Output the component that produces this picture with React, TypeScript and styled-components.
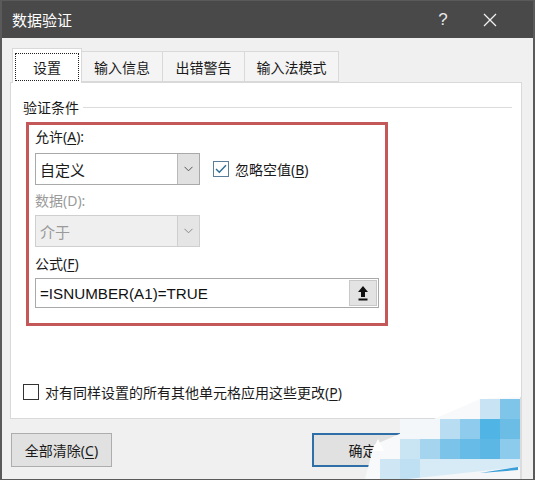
import React from 'react';
import styled, { createGlobalStyle } from 'styled-components';

const GlobalStyle = createGlobalStyle`
  html, body {
    margin: 0;
    padding: 0;
    background: #ffffff;
  }
  body {
    font-family: "Noto Sans", "Noto Sans CJK SC", sans-serif;
  }
`;

const Window = styled.div`
  position: relative;
  width: 535px;
  height: 480px;
  box-sizing: border-box;
  display: flex;
  flex-direction: column;
  background: #f0f0f0;
  border: 1px solid #5a5a5a;
  border-left-width: 2px;
  border-right-width: 2px;
  overflow: hidden;
`;

const TitleBar = styled.div`
  height: 37px;
  flex: none;
  display: flex;
  align-items: center;
  background: #494949;
  color: #ffffff;
  padding: 0 23px 0 10px;
  font-family: "Noto Sans CJK SC", sans-serif;
  font-size: 15px;
`;

const Title = styled.div`
  flex: 1;
`;

const TitleButton = styled.div<{ $w: number; $ml?: number }>`
  width: ${(p) => p.$w}px;
  margin-left: ${(p) => p.$ml ?? 0}px;
  display: flex;
  justify-content: center;
  align-items: center;
  color: #e8e8e8;
  font-size: 17px;
  font-family: "Liberation Sans", sans-serif;
`;

const Body = styled.div`
  flex: 1;
  display: flex;
  flex-direction: column;
  padding: 9px 11px 0 8px;
`;

const TabBar = styled.div`
  display: flex;
  align-items: flex-end;
  height: 35px;
  padding-left: 2px;
`;

const Tab = styled.div<{ $w: number; $active?: boolean }>`
  width: ${(p) => p.$w}px;
  height: ${(p) => (p.$active ? 35 : 31)}px;
  box-sizing: border-box;
  display: flex;
  align-items: center;
  justify-content: center;
  background: ${(p) => (p.$active ? '#ffffff' : '#f4f4f4')};
  border: 1px solid #d9d9d9;
  border-bottom: ${(p) => (p.$active ? 'none' : '1px solid #d9d9d9')};
  margin-left: ${(p) => (p.$active ? 0 : -1)}px;
  margin-bottom: ${(p) => (p.$active ? -1 : 0)}px;
  position: relative;
  z-index: ${(p) => (p.$active ? 2 : 1)};
  font-size: 14px;
  color: #1a1a1a;
`;

const FocusRect = styled.span`
  display: flex;
  align-items: center;
  justify-content: center;
  width: 62px;
  height: 26px;
  margin-top: 2px;
  border: 1px dotted #222;
`;

const Panel = styled.div`
  height: 337px;
  box-sizing: border-box;
  display: flex;
  flex-direction: column;
  background: #ffffff;
  border: 1px solid #d9d9d9;
  padding: 14px 9px 16px 12px;
  font-size: 14px;
  color: #1a1a1a;
`;

const GroupHeader = styled.div`
  display: flex;
  align-items: center;
  gap: 4px;
  height: 20px;
`;

const GroupLine = styled.div`
  flex: 1;
  height: 1px;
  background: #dcdcdc;
`;

const Highlight = styled.div`
  width: 362px;
  height: 204px;
  box-sizing: border-box;
  margin: 5px 0 0 3px;
  border: 3px solid #c45858;
  padding: 2px 6px 0 6px;
  display: flex;
  flex-direction: column;
`;

const Label = styled.div<{ $disabled?: boolean; $mt?: number }>`
  height: 20px;
  line-height: 20px;
  margin-top: ${(p) => p.$mt ?? 0}px;
  color: ${(p) => (p.$disabled ? '#9a9a9a' : '#1a1a1a')};
`;

const U = styled.span`
  text-decoration: underline;
  text-underline-offset: 2px;
`;

const Row = styled.div<{ $mt?: number }>`
  display: flex;
  align-items: center;
  margin-top: ${(p) => p.$mt ?? 0}px;
`;

const Select = styled.div<{ $disabled?: boolean }>`
  width: 165px;
  height: 32px;
  box-sizing: border-box;
  display: flex;
  border: 1px solid ${(p) => (p.$disabled ? '#cfcfcf' : '#a9a9a9')};
  background: ${(p) => (p.$disabled ? '#efefef' : '#ffffff')};
  color: ${(p) => (p.$disabled ? '#9a9a9a' : '#1a1a1a')};
`;

const SelectValue = styled.div`
  flex: 1;
  display: flex;
  align-items: center;
  padding-left: 4px;
  font-size: 15px;
`;

const SelectArrow = styled.div<{ $disabled?: boolean }>`
  width: 21px;
  display: flex;
  align-items: center;
  justify-content: center;
  background: ${(p) => (p.$disabled ? '#e5e5e5' : '#e1e1e1')};
  border-left: 1px solid ${(p) => (p.$disabled ? '#cfcfcf' : '#b9b9b9')};
`;

const CheckLabel = styled.label<{ $ml?: number }>`
  display: flex;
  align-items: center;
  gap: 6px;
  margin-left: ${(p) => p.$ml ?? 0}px;
`;

const Box = styled.span`
  width: 16px;
  height: 16px;
  box-sizing: border-box;
  display: flex;
  align-items: center;
  justify-content: center;
  border: 1px solid #333;
  background: #fff;
`;

const CheckedBox = styled(Box)`
  border-color: #5b7f99;
`;

const Formula = styled.div`
  width: 344px;
  height: 30px;
  box-sizing: border-box;
  display: flex;
  border: 1px solid #a9a9a9;
  background: #fff;
`;

const FormulaText = styled.div`
  flex: 1;
  display: flex;
  align-items: center;
  padding-left: 4px;
  font-family: "Liberation Sans", sans-serif;
  font-size: 15.2px;
  color: #111;
`;

const RefButton = styled.div`
  width: 26px;
  margin: 1px;
  display: flex;
  align-items: center;
  justify-content: center;
  background: #e3e3e3;
  border: 1px solid #c8c8c8;
`;

const BottomCheck = styled(CheckLabel)`
  margin-top: auto;
  margin-left: 0;
`;

const ButtonRow = styled.div`
  display: flex;
  margin-top: 14px;
  padding-left: 1px;
`;

const Button = styled.div<{ $primary?: boolean; $ml?: number }>`
  width: 101px;
  height: 34px;
  box-sizing: border-box;
  display: flex;
  align-items: center;
  justify-content: center;
  margin-left: ${(p) => p.$ml ?? 0}px;
  background: #e1e1e1;
  border: ${(p) => (p.$primary ? '2px solid #2f6fa8' : '1px solid #adadad')};
  font-size: 14px;
  color: #1a1a1a;
`;

const Watermark = styled.svg`
  position: absolute;
  right: 0;
  bottom: 0;
`;

const Chevron = ({ color }: { color: string }) => (
  <svg width="9" height="6" viewBox="0 0 9 6">
    <path d="M0.5 0.8 L4.5 4.8 L8.5 0.8" fill="none" stroke={color} strokeWidth="1" />
  </svg>
);

// watermark cells, in page coordinates (x, y, w, h, colour)
const cells: [number, number, number, number, string][] = [
  [480, 400, 20, 20, '#c8e3f3'],
  [500, 400, 20, 20, '#7fc4e9'],
  [400, 420, 40, 20, '#f4f7f9'],
  [440, 420, 20, 20, '#b8dcf1'],
  [460, 420, 20, 20, '#8fcbec'],
  [480, 420, 20, 20, '#50b4e4'],
  [500, 420, 20, 20, '#6bbde6'],
  [400, 440, 20, 20, '#c9e5f4'],
  [420, 440, 20, 20, '#a5d4ee'],
  [440, 440, 20, 20, '#7cc3ea'],
  [460, 440, 20, 20, '#67bbe7'],
  [480, 440, 20, 20, '#5db7e5'],
  [500, 440, 20, 20, '#8ccbeb'],
  [380, 460, 20, 20, '#cfe6f4'],
  [400, 460, 20, 20, '#bfe0f2'],
  [420, 460, 100, 20, '#d6ebf6'],
];

const WX = 363;
const WY = 396;

const App: React.FC = () => {
  return (
    <>
      <GlobalStyle />
      <Window>
        <TitleBar>
          <Title>数据验证</Title>
          <TitleButton $w={30}>?</TitleButton>
          <TitleButton $w={40} $ml={12}>
            <svg width="14" height="14" viewBox="0 0 14 14">
              <path d="M1 1 L13 13 M13 1 L1 13" stroke="#f0f0f0" strokeWidth="1.3" />
            </svg>
          </TitleButton>
        </TitleBar>
        <Body>
          <TabBar>
            <Tab $w={70} $active>
              <FocusRect>设置</FocusRect>
            </Tab>
            <Tab $w={82}>输入信息</Tab>
            <Tab $w={83}>出错警告</Tab>
            <Tab $w={95}>输入法模式</Tab>
          </TabBar>
          <Panel>
            <GroupHeader>
              <span>验证条件</span>
              <GroupLine />
            </GroupHeader>
            <Highlight>
              <Label>
                允许(<U>A</U>):
              </Label>
              <Row $mt={6}>
                <Select>
                  <SelectValue>自定义</SelectValue>
                  <SelectArrow>
                    <Chevron color="#555" />
                  </SelectArrow>
                </Select>
                <CheckLabel $ml={13}>
                  <CheckedBox>
                    <svg width="12" height="10" viewBox="0 0 12 10">
                      <path d="M1 5 L4.3 8.3 L11 1.2" fill="none" stroke="#2c6d94" strokeWidth="1.4" />
                    </svg>
                  </CheckedBox>
                  <span>
                    忽略空值(<U>B</U>)
                  </span>
                </CheckLabel>
              </Row>
              <Label $disabled $mt={6}>
                数据(D):
              </Label>
              <Row $mt={4}>
                <Select $disabled>
                  <SelectValue>介于</SelectValue>
                  <SelectArrow $disabled>
                    <Chevron color="#8a8a8a" />
                  </SelectArrow>
                </Select>
              </Row>
              <Label $mt={7}>
                公式(<U>F</U>)
              </Label>
              <Row $mt={4}>
                <Formula>
                  <FormulaText>=ISNUMBER(A1)=TRUE</FormulaText>
                  <RefButton>
                    <svg width="12" height="16" viewBox="0 0 12 16">
                      <path d="M6 1 L11 7 L8 7 L8 12 L4 12 L4 7 L1 7 Z" fill="#111" />
                      <rect x="1.5" y="13.5" width="9" height="2" fill="#111" />
                    </svg>
                  </RefButton>
                </Formula>
              </Row>
            </Highlight>
            <BottomCheck>
              <Box />
              <span>
                对有同样设置的所有其他单元格应用这些更改(<U>P</U>)
              </span>
            </BottomCheck>
          </Panel>
          <ButtonRow>
            <Button>
              全部清除(<U>C</U>)
            </Button>
            <Button $primary $ml={200}>
              确定
            </Button>
          </ButtonRow>
        </Body>
        <Watermark width="170" height="84" viewBox={`${WX} ${WY} 170 84`}>
          <path d="M365 480 L374 446 L480 400 L520 398 L522 480 Z" fill="#f7f9fb" />
          <path d="M372 452 L378 440 L384 452 Z" fill="#ffffff" />
          {cells.map(([x, y, w, h, c], i) => (
            <rect key={i} x={x} y={y} width={w} height={h} fill={c} />
          ))}
          <path d="M408 480 L520 468 L520 480 Z" fill="#f4f6f8" />
          <path d="M480 474 L518 468 L518 471 Z" fill="#3a9fd8" />
          <rect x="520" y="398" width="2" height="82" fill="#dcdcdc" />
          <rect x="522" y="398" width="9" height="82" fill="#f0f0f0" />
        </Watermark>
      </Window>
    </>
  );
};

export default App;
